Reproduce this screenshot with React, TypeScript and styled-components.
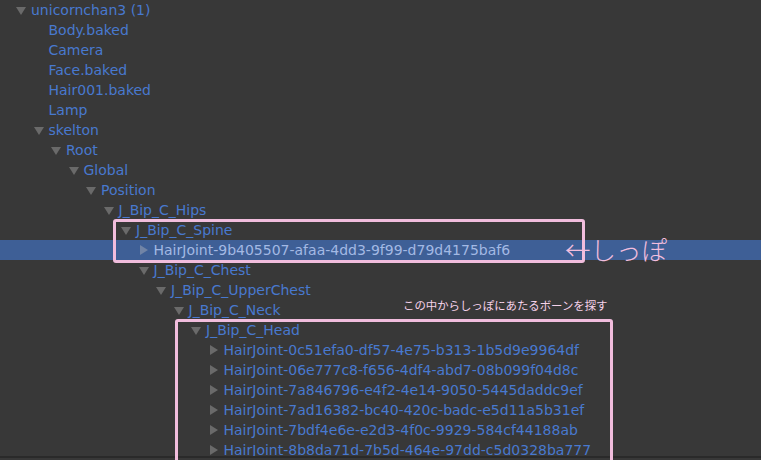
import React from "react";
import styled, { createGlobalStyle } from "styled-components";

const Global = createGlobalStyle`
  html, body { margin: 0; padding: 0; background: #383838; overflow: hidden; }
  #root { width: 761px; height: 460px; }
`;

const Stage = styled.div`
  position: relative;
  width: 761px;
  height: 460px;
  background: #383838;
  overflow: hidden;
`;

const Viewport = styled.div`
  height: 456px;
  overflow: hidden;
  border-bottom: 2px solid #2a2a2a;
  display: flex;
  flex-direction: column;
`;

const Row = styled.div<{ $level: number; $selected?: boolean }>`
  flex: 0 0 20px;
  height: 20px;
  display: flex;
  align-items: center;
  padding-left: ${(p) => 16 + p.$level * 17.5}px;
  background: ${(p) => (p.$selected ? "#3e5f96" : "transparent")};
`;

const Toggle = styled.span`
  width: 15px;
  flex: 0 0 15px;
  height: 20px;
  display: flex;
  align-items: center;
`;

const Label = styled.span<{ $selected?: boolean }>`
  font-family: "DejaVu Sans", Verdana, sans-serif;
  font-size: 14px;
  line-height: 20px;
  color: ${(p) => (p.$selected ? "#a3b9e4" : "#4879cf")};
  white-space: nowrap;
`;

const DownTri = styled.svg`
  width: 10px;
  height: 8px;
  margin-top: 2px;
  display: block;
`;

const RightTri = styled.svg`
  width: 8px;
  height: 10px;
  margin-left: 1.5px;
  display: block;
`;

const Frame = styled.div<{ $left: number; $top: number; $w: number; $h: number }>`
  position: absolute;
  left: ${(p) => p.$left}px;
  top: ${(p) => p.$top}px;
  width: ${(p) => p.$w}px;
  height: ${(p) => p.$h}px;
  box-sizing: border-box;
  border: 3.5px solid #f1bddd;
  border-radius: 3px;
  pointer-events: none;
`;

const Callout = styled.div`
  position: absolute;
  left: 565px;
  top: 233px;
  font-family: "Noto Sans CJK JP", sans-serif;
  font-weight: 300;
  font-size: 25.5px;
  line-height: 32px;
  color: #f1bddd;
  white-space: nowrap;
`;

const Note = styled.div`
  position: absolute;
  left: 403px;
  top: 297px;
  font-family: "Noto Sans CJK JP", sans-serif;
  font-size: 11.4px;
  line-height: 16px;
  color: #f6d2ea;
  white-space: nowrap;
`;

type Node = { level: number; label: string; kind: "down" | "right" | "none"; selected?: boolean };

const nodes: Node[] = [
  { level: 0, label: "unicornchan3 (1)", kind: "down" },
  { level: 1, label: "Body.baked", kind: "none" },
  { level: 1, label: "Camera", kind: "none" },
  { level: 1, label: "Face.baked", kind: "none" },
  { level: 1, label: "Hair001.baked", kind: "none" },
  { level: 1, label: "Lamp", kind: "none" },
  { level: 1, label: "skelton", kind: "down" },
  { level: 2, label: "Root", kind: "down" },
  { level: 3, label: "Global", kind: "down" },
  { level: 4, label: "Position", kind: "down" },
  { level: 5, label: "J_Bip_C_Hips", kind: "down" },
  { level: 6, label: "J_Bip_C_Spine", kind: "down" },
  { level: 7, label: "HairJoint-9b405507-afaa-4dd3-9f99-d79d4175baf6", kind: "right", selected: true },
  { level: 7, label: "J_Bip_C_Chest", kind: "down" },
  { level: 8, label: "J_Bip_C_UpperChest", kind: "down" },
  { level: 9, label: "J_Bip_C_Neck", kind: "down" },
  { level: 10, label: "J_Bip_C_Head", kind: "down" },
  { level: 11, label: "HairJoint-0c51efa0-df57-4e75-b313-1b5d9e9964df", kind: "right" },
  { level: 11, label: "HairJoint-06e777c8-f656-4df4-abd7-08b099f04d8c", kind: "right" },
  { level: 11, label: "HairJoint-7a846796-e4f2-4e14-9050-5445daddc9ef", kind: "right" },
  { level: 11, label: "HairJoint-7ad16382-bc40-420c-badc-e5d11a5b31ef", kind: "right" },
  { level: 11, label: "HairJoint-7bdf4e6e-e2d3-4f0c-9929-584cf44188ab", kind: "right" },
  { level: 11, label: "HairJoint-8b8da71d-7b5d-464e-97dd-c5d0328ba777", kind: "right" },
];

function Arrow({ kind, selected }: { kind: Node["kind"]; selected?: boolean }) {
  const fill = selected ? "#7184a6" : "#6a6a6a";
  if (kind === "down")
    return (
      <DownTri viewBox="0 0 10 8">
        <polygon points="0,0 10,0 5,8" fill={fill} />
      </DownTri>
    );
  if (kind === "right")
    return (
      <RightTri viewBox="0 0 8 10">
        <polygon points="0,0 8,5 0,10" fill={fill} />
      </RightTri>
    );
  return null;
}

export default function App() {
  return (
    <>
      <Global />
      <Stage>
        <Viewport>
          {nodes.map((n, i) => (
            <Row key={i} $level={n.level} $selected={n.selected}>
              <Toggle>
                <Arrow kind={n.kind} selected={n.selected} />
              </Toggle>
              <Label $selected={n.selected}>{n.label}</Label>
            </Row>
          ))}
        </Viewport>
        <Frame $left={113} $top={219} $w={472} $h={44} />
        <Frame $left={175} $top={319} $w={438} $h={160} />
        <Callout>←しっぽ</Callout>
        <Note>この中からしっぽにあたるボーンを探す</Note>
      </Stage>
    </>
  );
}
